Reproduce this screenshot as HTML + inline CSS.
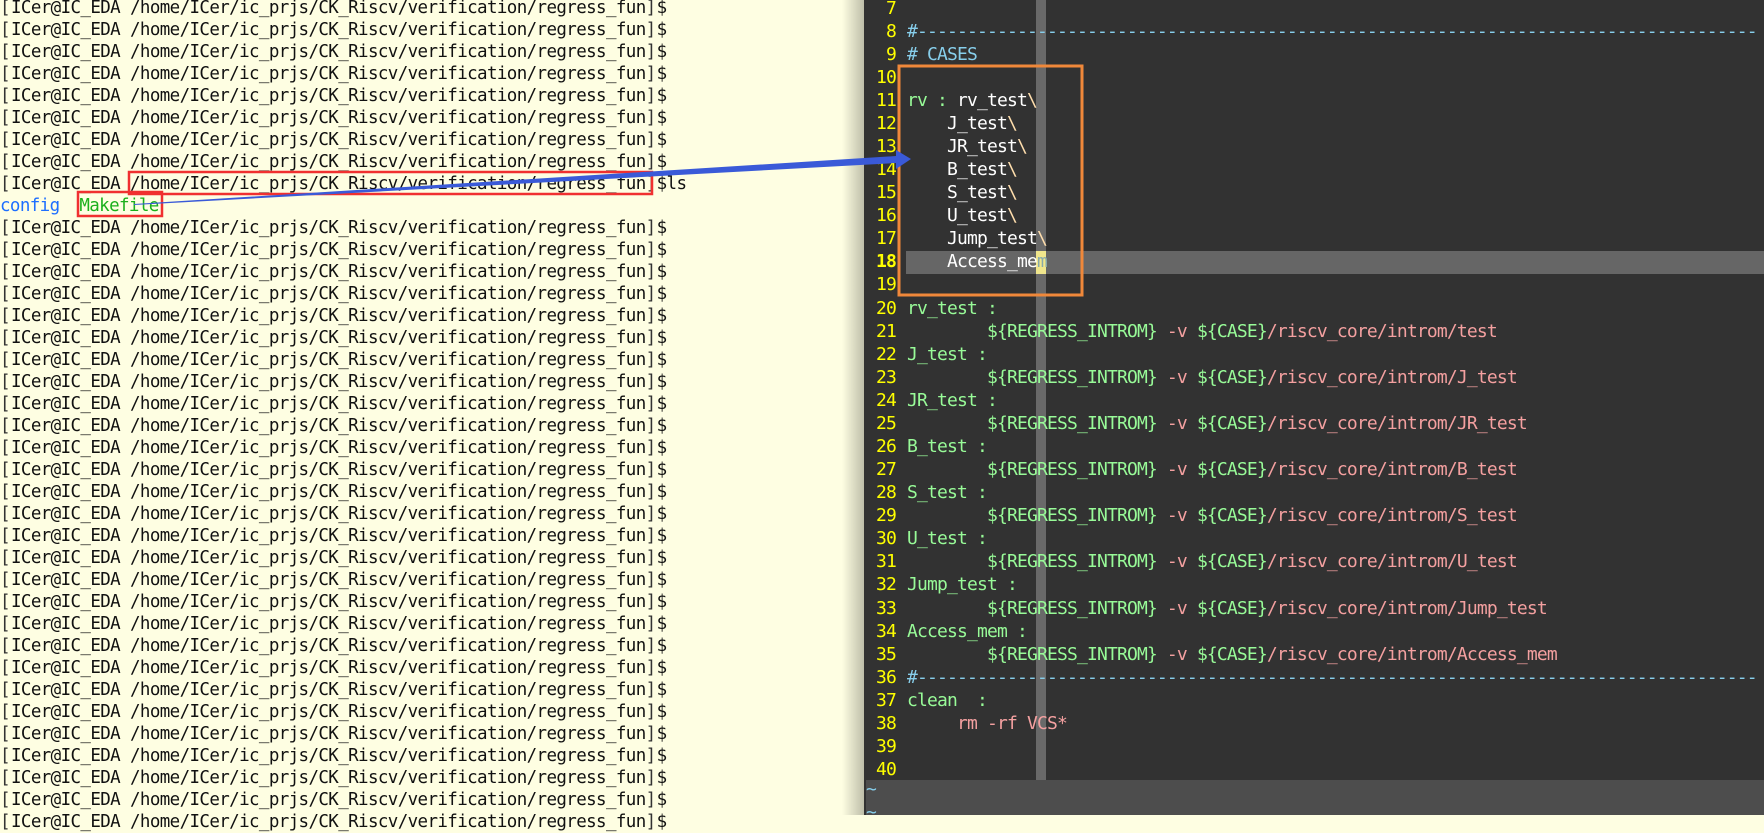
<!DOCTYPE html>
<html><head><meta charset="utf-8"><style>
*{margin:0;padding:0;box-sizing:border-box}
body{width:1764px;height:815px;overflow:hidden;position:relative;background:#fefee2;font-family:"DejaVu Sans Mono","Liberation Mono",monospace}
#left{position:absolute;left:0;top:0;width:864px;height:815px;background:#fefee2;font-size:17.5px;letter-spacing:-0.62px;color:#111}
#left div{position:absolute;left:0;height:22px;line-height:22px;white-space:pre}
.b{display:inline-block;width:11px;font-weight:300;color:#333}
.e{display:inline-block;width:11px;color:#333}
#shadow{position:absolute;left:842px;top:0;width:22px;height:815px;background:linear-gradient(to right,rgba(0,0,0,0),rgba(0,0,0,0.25))}
#right{position:absolute;left:864px;top:0;width:900px;height:815px;background:#323232;font-size:18px;letter-spacing:-0.84px;color:#fff}
#right .l{position:absolute;left:0;height:23.08px;line-height:23.08px;white-space:pre;width:900px}
.n{display:inline-block;width:32px;text-align:right;color:#ffff00;margin-right:11px}
.c{color:#87ceeb}.g{color:#98fb98}.p{color:#f4a0a0}.t{color:#ffdead}
#col{position:absolute;left:172px;top:0;width:10px;height:780px;background:#696969}
#cl{position:absolute;left:42px;top:251px;width:858px;height:23px;background:#666}
#cur{position:absolute;left:172px;top:251px;width:10px;height:23px;background:#f0e68c}
#bot{position:absolute;left:2px;top:780px;width:898px;height:35px;background:#4d4d4d;color:#87ceeb}
</style></head><body>
<div id="left">
<div style="top:-3.5px"><span class="b">[</span>ICer@IC_EDA /home/ICer/ic_prjs/CK_Riscv/verification/regress_fun<span class="e">]</span>$</div>
<div style="top:18.5px"><span class="b">[</span>ICer@IC_EDA /home/ICer/ic_prjs/CK_Riscv/verification/regress_fun<span class="e">]</span>$</div>
<div style="top:40.5px"><span class="b">[</span>ICer@IC_EDA /home/ICer/ic_prjs/CK_Riscv/verification/regress_fun<span class="e">]</span>$</div>
<div style="top:62.5px"><span class="b">[</span>ICer@IC_EDA /home/ICer/ic_prjs/CK_Riscv/verification/regress_fun<span class="e">]</span>$</div>
<div style="top:84.5px"><span class="b">[</span>ICer@IC_EDA /home/ICer/ic_prjs/CK_Riscv/verification/regress_fun<span class="e">]</span>$</div>
<div style="top:106.5px"><span class="b">[</span>ICer@IC_EDA /home/ICer/ic_prjs/CK_Riscv/verification/regress_fun<span class="e">]</span>$</div>
<div style="top:128.5px"><span class="b">[</span>ICer@IC_EDA /home/ICer/ic_prjs/CK_Riscv/verification/regress_fun<span class="e">]</span>$</div>
<div style="top:150.5px"><span class="b">[</span>ICer@IC_EDA /home/ICer/ic_prjs/CK_Riscv/verification/regress_fun<span class="e">]</span>$</div>
<div style="top:172.5px"><span class="b">[</span>ICer@IC_EDA /home/ICer/ic_prjs/CK_Riscv/verification/regress_fun<span class="e">]</span>$ls</div>
<div style="top:194.5px"><span style="color:#1e6fff">config</span>  <span style="color:#1cb01c">Makefile</span></div>
<div style="top:216.5px"><span class="b">[</span>ICer@IC_EDA /home/ICer/ic_prjs/CK_Riscv/verification/regress_fun<span class="e">]</span>$</div>
<div style="top:238.5px"><span class="b">[</span>ICer@IC_EDA /home/ICer/ic_prjs/CK_Riscv/verification/regress_fun<span class="e">]</span>$</div>
<div style="top:260.5px"><span class="b">[</span>ICer@IC_EDA /home/ICer/ic_prjs/CK_Riscv/verification/regress_fun<span class="e">]</span>$</div>
<div style="top:282.5px"><span class="b">[</span>ICer@IC_EDA /home/ICer/ic_prjs/CK_Riscv/verification/regress_fun<span class="e">]</span>$</div>
<div style="top:304.5px"><span class="b">[</span>ICer@IC_EDA /home/ICer/ic_prjs/CK_Riscv/verification/regress_fun<span class="e">]</span>$</div>
<div style="top:326.5px"><span class="b">[</span>ICer@IC_EDA /home/ICer/ic_prjs/CK_Riscv/verification/regress_fun<span class="e">]</span>$</div>
<div style="top:348.5px"><span class="b">[</span>ICer@IC_EDA /home/ICer/ic_prjs/CK_Riscv/verification/regress_fun<span class="e">]</span>$</div>
<div style="top:370.5px"><span class="b">[</span>ICer@IC_EDA /home/ICer/ic_prjs/CK_Riscv/verification/regress_fun<span class="e">]</span>$</div>
<div style="top:392.5px"><span class="b">[</span>ICer@IC_EDA /home/ICer/ic_prjs/CK_Riscv/verification/regress_fun<span class="e">]</span>$</div>
<div style="top:414.5px"><span class="b">[</span>ICer@IC_EDA /home/ICer/ic_prjs/CK_Riscv/verification/regress_fun<span class="e">]</span>$</div>
<div style="top:436.5px"><span class="b">[</span>ICer@IC_EDA /home/ICer/ic_prjs/CK_Riscv/verification/regress_fun<span class="e">]</span>$</div>
<div style="top:458.5px"><span class="b">[</span>ICer@IC_EDA /home/ICer/ic_prjs/CK_Riscv/verification/regress_fun<span class="e">]</span>$</div>
<div style="top:480.5px"><span class="b">[</span>ICer@IC_EDA /home/ICer/ic_prjs/CK_Riscv/verification/regress_fun<span class="e">]</span>$</div>
<div style="top:502.5px"><span class="b">[</span>ICer@IC_EDA /home/ICer/ic_prjs/CK_Riscv/verification/regress_fun<span class="e">]</span>$</div>
<div style="top:524.5px"><span class="b">[</span>ICer@IC_EDA /home/ICer/ic_prjs/CK_Riscv/verification/regress_fun<span class="e">]</span>$</div>
<div style="top:546.5px"><span class="b">[</span>ICer@IC_EDA /home/ICer/ic_prjs/CK_Riscv/verification/regress_fun<span class="e">]</span>$</div>
<div style="top:568.5px"><span class="b">[</span>ICer@IC_EDA /home/ICer/ic_prjs/CK_Riscv/verification/regress_fun<span class="e">]</span>$</div>
<div style="top:590.5px"><span class="b">[</span>ICer@IC_EDA /home/ICer/ic_prjs/CK_Riscv/verification/regress_fun<span class="e">]</span>$</div>
<div style="top:612.5px"><span class="b">[</span>ICer@IC_EDA /home/ICer/ic_prjs/CK_Riscv/verification/regress_fun<span class="e">]</span>$</div>
<div style="top:634.5px"><span class="b">[</span>ICer@IC_EDA /home/ICer/ic_prjs/CK_Riscv/verification/regress_fun<span class="e">]</span>$</div>
<div style="top:656.5px"><span class="b">[</span>ICer@IC_EDA /home/ICer/ic_prjs/CK_Riscv/verification/regress_fun<span class="e">]</span>$</div>
<div style="top:678.5px"><span class="b">[</span>ICer@IC_EDA /home/ICer/ic_prjs/CK_Riscv/verification/regress_fun<span class="e">]</span>$</div>
<div style="top:700.5px"><span class="b">[</span>ICer@IC_EDA /home/ICer/ic_prjs/CK_Riscv/verification/regress_fun<span class="e">]</span>$</div>
<div style="top:722.5px"><span class="b">[</span>ICer@IC_EDA /home/ICer/ic_prjs/CK_Riscv/verification/regress_fun<span class="e">]</span>$</div>
<div style="top:744.5px"><span class="b">[</span>ICer@IC_EDA /home/ICer/ic_prjs/CK_Riscv/verification/regress_fun<span class="e">]</span>$</div>
<div style="top:766.5px"><span class="b">[</span>ICer@IC_EDA /home/ICer/ic_prjs/CK_Riscv/verification/regress_fun<span class="e">]</span>$</div>
<div style="top:788.5px"><span class="b">[</span>ICer@IC_EDA /home/ICer/ic_prjs/CK_Riscv/verification/regress_fun<span class="e">]</span>$</div>
<div style="top:810.5px"><span class="b">[</span>ICer@IC_EDA /home/ICer/ic_prjs/CK_Riscv/verification/regress_fun<span class="e">]</span>$</div>
</div>
<div id="shadow"></div>
<div id="right">
<div id="cl"></div>
<div id="col"></div>
<div id="cur"></div>
<div class="l" style="top:-3.5px"><span class="n">7</span></div>
<div class="l" style="top:19.6px"><span class="n">8</span><span class="c">#------------------------------------------------------------------------------------</span></div>
<div class="l" style="top:42.7px"><span class="n">9</span><span class="c"># CASES</span></div>
<div class="l" style="top:65.7px"><span class="n">10</span></div>
<div class="l" style="top:88.8px"><span class="n">11</span><span class="g">rv :</span> rv_test<span class="t">\</span></div>
<div class="l" style="top:111.9px"><span class="n">12</span>    J_test<span class="t">\</span></div>
<div class="l" style="top:135px"><span class="n">13</span>    JR_test<span class="t">\</span></div>
<div class="l" style="top:158px"><span class="n">14</span>    B_test<span class="t">\</span></div>
<div class="l" style="top:181.1px"><span class="n">15</span>    S_test<span class="t">\</span></div>
<div class="l" style="top:204.2px"><span class="n">16</span>    U_test<span class="t">\</span></div>
<div class="l" style="top:227.3px"><span class="n">17</span>    Jump_test<span class="t">\</span></div>
<div class="l" style="top:250.4px"><span class="n" style="font-weight:bold">18</span>    Access_me<span style="color:#8aa">m</span></div>
<div class="l" style="top:273.4px"><span class="n">19</span></div>
<div class="l" style="top:296.5px"><span class="n">20</span><span class="g">rv_test :</span></div>
<div class="l" style="top:319.6px"><span class="n">21</span>        <span class="g">${REGRESS_INTROM}</span><span class="p"> -v </span><span class="g">${CASE}</span><span class="p">/riscv_core/introm/test</span></div>
<div class="l" style="top:342.7px"><span class="n">22</span><span class="g">J_test :</span></div>
<div class="l" style="top:365.7px"><span class="n">23</span>        <span class="g">${REGRESS_INTROM}</span><span class="p"> -v </span><span class="g">${CASE}</span><span class="p">/riscv_core/introm/J_test</span></div>
<div class="l" style="top:388.8px"><span class="n">24</span><span class="g">JR_test :</span></div>
<div class="l" style="top:411.9px"><span class="n">25</span>        <span class="g">${REGRESS_INTROM}</span><span class="p"> -v </span><span class="g">${CASE}</span><span class="p">/riscv_core/introm/JR_test</span></div>
<div class="l" style="top:435px"><span class="n">26</span><span class="g">B_test :</span></div>
<div class="l" style="top:458px"><span class="n">27</span>        <span class="g">${REGRESS_INTROM}</span><span class="p"> -v </span><span class="g">${CASE}</span><span class="p">/riscv_core/introm/B_test</span></div>
<div class="l" style="top:481.1px"><span class="n">28</span><span class="g">S_test :</span></div>
<div class="l" style="top:504.2px"><span class="n">29</span>        <span class="g">${REGRESS_INTROM}</span><span class="p"> -v </span><span class="g">${CASE}</span><span class="p">/riscv_core/introm/S_test</span></div>
<div class="l" style="top:527.3px"><span class="n">30</span><span class="g">U_test :</span></div>
<div class="l" style="top:550.4px"><span class="n">31</span>        <span class="g">${REGRESS_INTROM}</span><span class="p"> -v </span><span class="g">${CASE}</span><span class="p">/riscv_core/introm/U_test</span></div>
<div class="l" style="top:573.4px"><span class="n">32</span><span class="g">Jump_test :</span></div>
<div class="l" style="top:596.5px"><span class="n">33</span>        <span class="g">${REGRESS_INTROM}</span><span class="p"> -v </span><span class="g">${CASE}</span><span class="p">/riscv_core/introm/Jump_test</span></div>
<div class="l" style="top:619.6px"><span class="n">34</span><span class="g">Access_mem :</span></div>
<div class="l" style="top:642.7px"><span class="n">35</span>        <span class="g">${REGRESS_INTROM}</span><span class="p"> -v </span><span class="g">${CASE}</span><span class="p">/riscv_core/introm/Access_mem</span></div>
<div class="l" style="top:665.7px"><span class="n">36</span><span class="c">#------------------------------------------------------------------------------------</span></div>
<div class="l" style="top:688.8px"><span class="n">37</span><span class="g">clean  :</span></div>
<div class="l" style="top:711.9px"><span class="n">38</span><span class="p">     rm -rf VCS*</span></div>
<div class="l" style="top:735px"><span class="n">39</span></div>
<div class="l" style="top:758px"><span class="n">40</span></div>
<div id="bot"><div style="position:absolute;left:0;top:-2px;line-height:23px">~</div><div style="position:absolute;left:0;top:21px;line-height:23px">~</div></div>
</div>
<svg style="position:absolute;left:0;top:0" width="1764" height="815">
<rect x="129" y="172" width="523" height="22" fill="none" stroke="#f03030" stroke-width="2.5"/>
<rect x="78" y="192" width="84" height="24" fill="none" stroke="#f03030" stroke-width="2.5"/>
<rect x="899" y="66" width="183" height="229" fill="none" stroke="#f0883a" stroke-width="3"/>
<polygon points="134,205 896,163 896,169 911,159 896,150 896,156 134,204" fill="#3a5ad8"/>
</svg>
</body></html>
